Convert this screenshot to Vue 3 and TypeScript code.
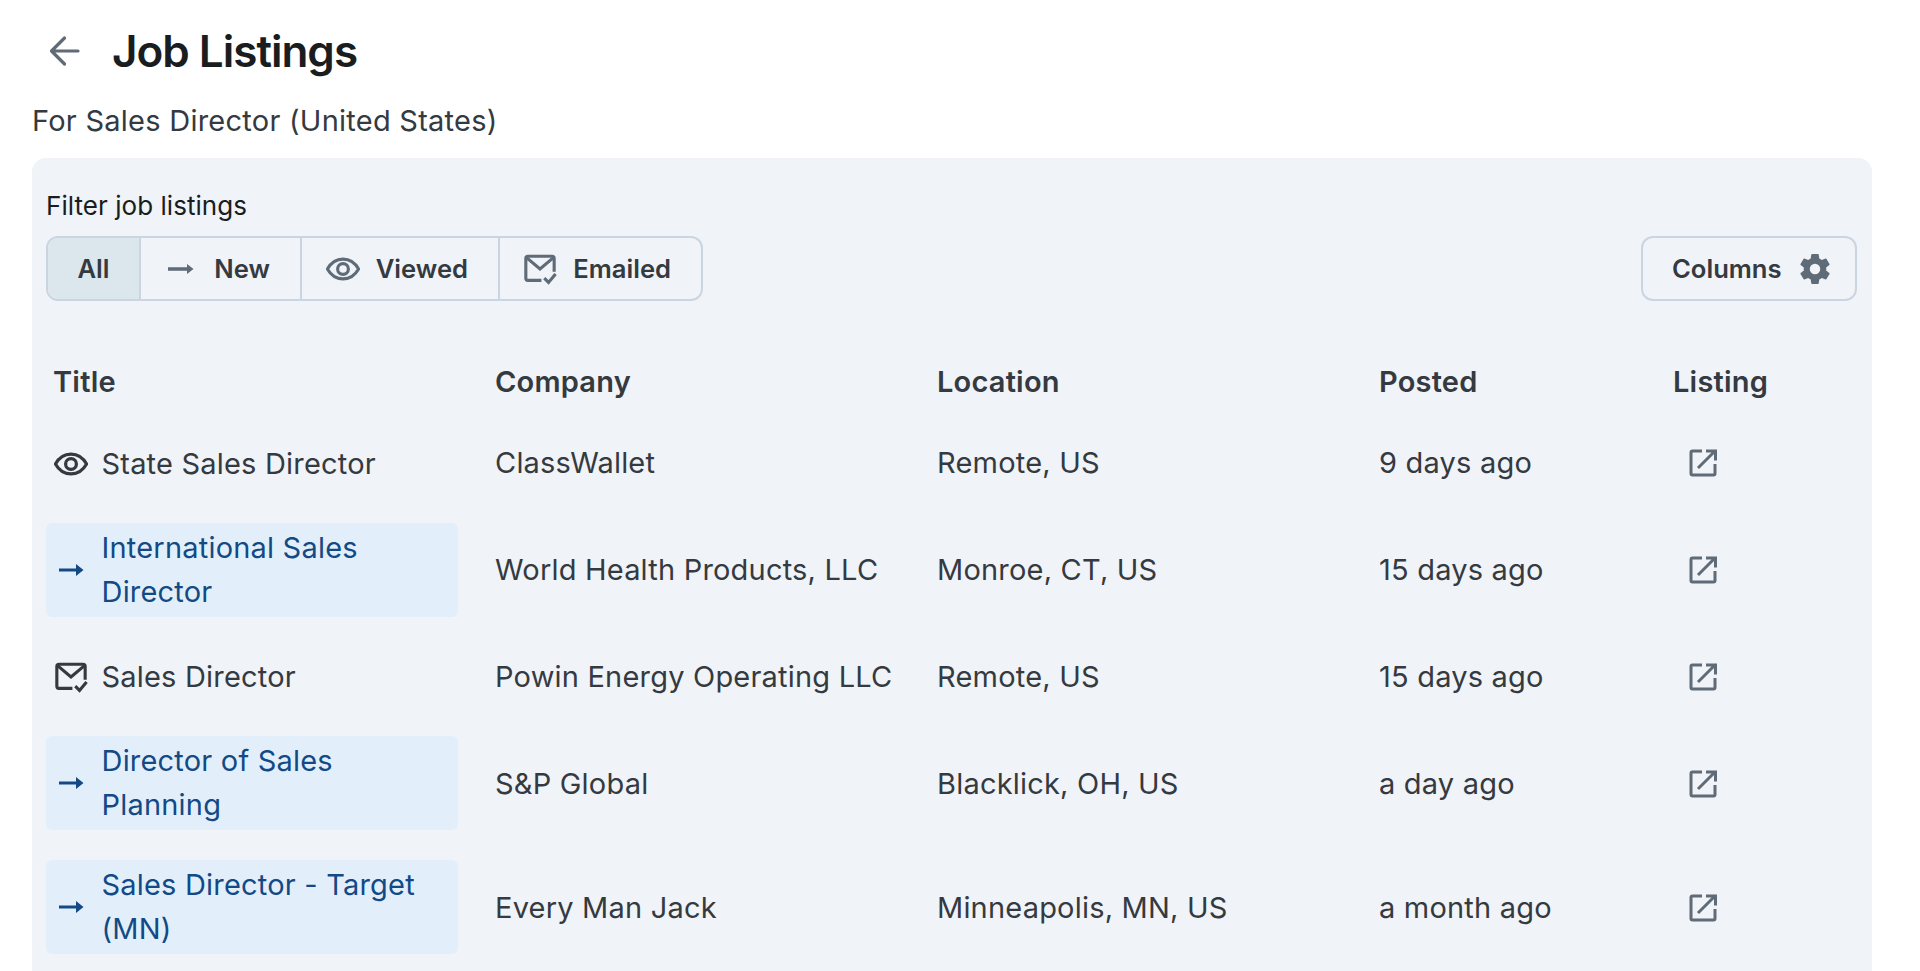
<script setup lang="ts">
type Status = 'viewed' | 'new' | 'emailed'
interface Job { title: string; company: string; location: string; posted: string; status: Status }
const jobs: Job[] = [
  { title: 'State Sales Director', company: 'ClassWallet', location: 'Remote, US', posted: '9 days ago', status: 'viewed' },
  { title: 'International Sales Director', company: 'World Health Products, LLC', location: 'Monroe, CT, US', posted: '15 days ago', status: 'new' },
  { title: 'Sales Director', company: 'Powin Energy Operating LLC', location: 'Remote, US', posted: '15 days ago', status: 'emailed' },
  { title: 'Director of Sales Planning', company: 'S&P Global', location: 'Blacklick, OH, US', posted: 'a day ago', status: 'new' },
  { title: 'Sales Director - Target (MN)', company: 'Every Man Jack', location: 'Minneapolis, MN, US', posted: 'a month ago', status: 'new' },
]
</script>

<template>
  <div class="page">
    <header class="head">
      <svg class="back" viewBox="0 0 32 32" fill="none" stroke="currentColor" stroke-width="3.200" stroke-linecap="round" stroke-linejoin="round"><path d="M30 16H3.500M16.500 3 3.500 16l13 13" /></svg>
      <h1>Job Listings</h1>
    </header>
    <p class="sub">For Sales Director (United States)</p>
    <section class="panel">
      <div class="label">Filter job listings</div>
      <div class="toolbar">
        <div class="group">
          <button class="seg active all">All</button>
          <button class="seg new">
            <svg class="ic arrow" viewBox="4 0 26 34"><path d="M4 15.300h19V12l6.500 5-6.500 5v-3.300H4z" fill="currentColor" /></svg>
            New
          </button>
          <button class="seg viewed">
            <svg class="ic" viewBox="0 0 24 24" fill="none" stroke="currentColor" stroke-width="2.200"><path d="M1 12c2.600-4.600 6.500-7 11-7s8.400 2.400 11 7c-2.600 4.600-6.500 7-11 7S3.600 16.600 1 12z" /><circle cx="12" cy="12" r="3.800" /></svg>
            Viewed
          </button>
          <button class="seg emailed">
            <svg class="ic" viewBox="0 0 24 24" fill="none" stroke="currentColor" stroke-width="2.200"><path d="M13 20H3.500A1.500 1.500 0 0 1 2 18.500v-14A1.500 1.500 0 0 1 3.500 3h17A1.500 1.500 0 0 1 22 4.500V14" /><path d="m2.500 4 9.500 8 9.500-8" /><path d="m15 18.500 3 3 5-6" /></svg>
            Emailed
          </button>
        </div>
        <button class="columns">
          Columns
          <svg class="gear" viewBox="0 0 24 24"><path fill="currentColor" fill-rule="evenodd" d="M19.430 12.980c.04-.32.070-.640.070-.980s-.03-.660-.070-.980l2.110-1.650c.190-.150.240-.420.120-.640l-2-3.460c-.120-.220-.390-.300-.610-.220l-2.490 1c-.520-.400-1.080-.730-1.690-.980l-.380-2.650A.488.488 0 0 0 14 2h-4c-.250 0-.460.180-.490.420l-.380 2.650c-.610.250-1.170.590-1.690.980l-2.490-1c-.230-.090-.490 0-.610.220l-2 3.460c-.130.220-.070.490.120.640l2.110 1.650c-.040.320-.070.650-.070.980s.03.660.070.980l-2.110 1.650c-.190.150-.240.420-.120.640l2 3.460c.120.220.390.300.610.220l2.490-1c.520.400 1.080.730 1.690.980l.380 2.650c.030.240.240.420.490.420h4c.250 0 .460-.180.490-.420l.380-2.650c.610-.250 1.170-.590 1.690-.980l2.490 1c.230.090.490 0 .610-.220l2-3.460c.120-.220.070-.490-.120-.640l-2.110-1.650zM12 15.500a3.500 3.500 0 1 1 0-7 3.500 3.500 0 0 1 0 7z" /></svg>
        </button>
      </div>
      <div class="table">
        <div class="row header">
          <div class="cell">Title</div>
          <div class="cell">Company</div>
          <div class="cell">Location</div>
          <div class="cell">Posted</div>
          <div class="cell">Listing</div>
        </div>
        <div v-for="job in jobs" :key="job.title" class="row body">
          <div class="title-cell" :class="{ fresh: job.status === 'new' }">
            <svg v-if="job.status === 'viewed'" class="st" viewBox="0 0 24 24" fill="none" stroke="currentColor" stroke-width="2.300"><path d="M1 12c2.600-4.600 6.500-7 11-7s8.400 2.400 11 7c-2.600 4.600-6.500 7-11 7S3.600 16.600 1 12z" /><circle cx="12" cy="12" r="3.800" /></svg>
            <svg v-else-if="job.status === 'new'" class="st" viewBox="0 0 34 34"><path d="M5 15.500h17V11l7.500 6-7.500 6v-4.500H5z" fill="currentColor" /></svg>
            <svg v-else class="st" viewBox="0 0 24 24" fill="none" stroke="currentColor" stroke-width="2.200"><path d="M13 20H3.500A1.500 1.500 0 0 1 2 18.500v-14A1.500 1.500 0 0 1 3.500 3h17A1.500 1.500 0 0 1 22 4.500V14" /><path d="m2.500 4 9.500 8 9.500-8" /><path d="m15 18.500 3 3 5-6" /></svg>
            <span>{{ job.title }}</span>
          </div>
          <div class="cell">{{ job.company }}</div>
          <div class="cell">{{ job.location }}</div>
          <div class="cell">{{ job.posted }}</div>
          <div class="cell">
            <svg class="ext" viewBox="0 0 28 28" fill="none" stroke="currentColor" stroke-width="3"><path d="M13 2H3.500A1.500 1.500 0 0 0 2 3.500v21A1.500 1.500 0 0 0 3.500 26h21a1.500 1.500 0 0 0 1.500-1.500V15" /><path d="M9 19 25 3M17 2h9.500v9.500" /></svg>
          </div>
        </div>
      </div>
    </section>
  </div>
</template>

<style>
html, body { margin: 0; background: #fff; overflow: hidden; }
</style>

<style scoped>
.page {
  height: 971px;
  box-sizing: border-box;
  padding: 24px 48px 0 32px;
  font-family: Inter, "Liberation Sans", sans-serif;
  color: #343a40;
  overflow: hidden;
}
.head { display: flex; align-items: center; gap: 32px; height: 54px; padding-left: 16px; }
.back { width: 32px; height: 32px; color: #5f6b76; flex: none; }
h1 { margin: 0; font-size: 44px; line-height: 54px; font-weight: 600; color: #1a1d20; letter-spacing: -1px; }
.sub { margin: 21px 0 0; font-size: 29px; letter-spacing: 0.25px; line-height: 44px; height: 44px; }
.panel { margin-top: 15px; background: #f0f3f8; border-radius: 14px; padding: 28px 14px 0; height: 900px; }
.label { font-size: 26px; letter-spacing: 0.05px; line-height: 40px; color: #1a1d20; }
.toolbar { display: flex; justify-content: space-between; margin-top: 10px; }
.group { display: flex; height: 65px; box-sizing: border-box; border: 2px solid #cbd5e1; border-radius: 12px; overflow: hidden; }
.seg, .columns {
  background: transparent;
  border: 0;
  padding: 0 30px 0 0;
  font: 600 25.600px Inter, "Liberation Sans", sans-serif;
  color: #343a40;
  display: flex;
  align-items: center;
  justify-content: flex-end;
  gap: 16px;
  box-sizing: border-box;
}
.seg + .seg { border-left: 2px solid #cbd5e1; }
.all { width: 91px; padding: 0; justify-content: center; }
.new { width: 161px; gap: 20px; }
.viewed { width: 198px; }
.emailed { width: 203px; }
.active { background: #dce6ed; }
.ic { width: 34px; height: 34px; color: #5f6b76; flex: none; }
.arrow { width: 26px; }
.columns { width: 216px; height: 65px; border: 2px solid #cbd5e1; border-radius: 12px; margin-right: 1px; padding: 0 0 0 29px; justify-content: flex-start; gap: 15px; }
.gear { width: 36px; height: 36px; color: #5f6b76; }
.table { margin-top: 43px; }
.row { display: grid; grid-template-columns: 442px 442px 442px 294px 192px; align-items: center; min-height: 89.500px; }
.row.header { min-height: 75px; font-weight: 600; }
.row > .cell { font-size: 29px; letter-spacing: 0.2px; line-height: 44px; padding-left: 7px; }
.row.body > .cell { padding-bottom: 1px; }
.title-cell { font-size: 29px; letter-spacing: 0.2px; line-height: 44px; display: flex; align-items: center; gap: 13.500px; padding: 0 30px 0 8px; margin-right: 30px; border-radius: 6px; }
.title-cell.fresh { background: #e2effb; color: #134a85; margin-top: 14px; margin-bottom: 16px; padding-top: 3px; padding-bottom: 3px; }
.st { width: 34px; height: 34px; flex: none; }
.ext { width: 28px; height: 28px; color: #5f6b76; display: block; margin-left: 16px; }
</style>
